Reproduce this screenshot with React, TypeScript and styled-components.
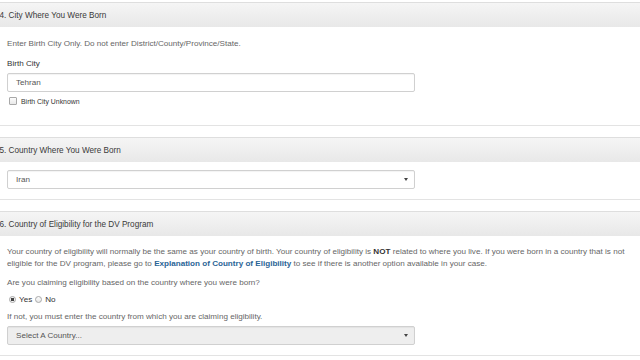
import React from 'react';
import styled, { createGlobalStyle } from 'styled-components';

const GlobalStyle = createGlobalStyle`
  html, body {
    margin: 0;
    padding: 0;
    background: #fff;
    overflow: hidden;
  }
  body {
    font-family: 'Liberation Sans', Arial, sans-serif;
    color: #555;
  }
`;

const Page = styled.div`
  width: 652px;
  margin-left: -4px;
  padding-top: 2px;
`;

const Panel = styled.section`
  border-top: 1px solid #dedede;
  border-bottom: 1px solid #e3e3e3;
  margin-bottom: 11px;
  background: #fff;
`;

const Heading = styled.div`
  height: 24px;
  display: flex;
  align-items: center;
  padding-left: 3.5px;
  background: linear-gradient(to bottom, #f5f5f5 0%, #e8e8e8 100%);
  color: #3a3a3a;
  font-size: 8.2px;
`;

const Body = styled.div<{ $pad?: string }>`
  padding: ${({ $pad }) => $pad ?? '8px 11px 10px'};
`;

const Help = styled.p<{ $mb?: number }>`
  margin: 0 0 ${({ $mb }) => $mb ?? 8}px;
  font-size: 8.1px;
  line-height: 12px;
  color: #666;
`;

const Label = styled.div`
  font-size: 8.1px;
  line-height: 12px;
  color: #333;
  margin-bottom: 3px;
`;

const Field = styled.div<{ $disabled?: boolean }>`
  box-sizing: border-box;
  width: 408px;
  height: 19px;
  display: flex;
  align-items: center;
  justify-content: space-between;
  padding: 0 6px 0 8px;
  border: 1px solid #d0d0d0;
  border-radius: 2px;
  background: ${({ $disabled }) => ($disabled ? '#eeeeee' : '#fff')};
  box-shadow: inset 0 1px 1px rgba(0, 0, 0, 0.05);
  font-size: 8.1px;
  color: #555;
`;

const Caret = styled.span`
  width: 0;
  height: 0;
  border-left: 2.5px solid transparent;
  border-right: 2.5px solid transparent;
  border-top: 3px solid #444;
`;

const CheckRow = styled.label`
  display: flex;
  align-items: center;
  gap: 4px;
  margin-top: 5px;
  padding-left: 2px;
  font-size: 6.9px;
  color: #333;
`;

const Box = styled.span`
  width: 8px;
  height: 8px;
  box-sizing: border-box;
  border: 1px solid #a8a8a8;
  border-radius: 1px;
  background: linear-gradient(#fcfcfc, #e8e8e8);
`;

const RadioRow = styled.div`
  display: flex;
  align-items: center;
  gap: 3px;
  padding-left: 2px;
  margin: 6px 0 7px;
  font-size: 8.1px;
  color: #333;
`;

const Radio = styled.span<{ $checked?: boolean }>`
  width: 7px;
  height: 7px;
  box-sizing: border-box;
  border-radius: 50%;
  border: 1px solid #a8a8a8;
  background: ${({ $checked }) =>
    $checked ? 'radial-gradient(circle, #444 0 1.6px, #f3f3f3 2px)' : 'linear-gradient(#fcfcfc, #e8e8e8)'};
`;

const Strong = styled.strong`
  color: #333;
`;

const Link = styled.a`
  color: #2a6496;
  font-weight: bold;
  text-decoration: none;
`;

const App: React.FC = () => (
  <>
    <GlobalStyle />
    <Page>
      <Panel>
        <Heading>4. City Where You Were Born</Heading>
        <Body $pad="11px 11px 20px">
          <Help $mb={8}>Enter Birth City Only. Do not enter District/County/Province/State.</Help>
          <Label>Birth City</Label>
          <Field>Tehran</Field>
          <CheckRow>
            <Box />
            Birth City Unknown
          </CheckRow>
        </Body>
      </Panel>

      <Panel>
        <Heading>5. Country Where You Were Born</Heading>
        <Body $pad="8px 11px 10px">
          <Field>
            Iran
            <Caret />
          </Field>
        </Body>
      </Panel>

      <Panel>
        <Heading>6. Country of Eligibility for the DV Program</Heading>
        <Body $pad="10px 11px 10px">
          <Help $mb={7}>
            Your country of eligibility will normally be the same as your country of birth. Your country of
            eligibility is <Strong>NOT</Strong> related to where you live. If you were born in a country that is
            not eligible for the DV program, please go to{' '}
            <Link href="#">Explanation of Country of Eligibility</Link> to see if there is another option
            available in your case.
          </Help>
          <Help $mb={0}>Are you claiming eligibility based on the country where you were born?</Help>
          <RadioRow>
            <Radio $checked />
            Yes
            <Radio />
            No
          </RadioRow>
          <Help $mb={3}>If not, you must enter the country from which you are claiming eligibility.</Help>
          <Field $disabled>
            Select A Country...
            <Caret />
          </Field>
        </Body>
      </Panel>
    </Page>
  </>
);

export default App;
